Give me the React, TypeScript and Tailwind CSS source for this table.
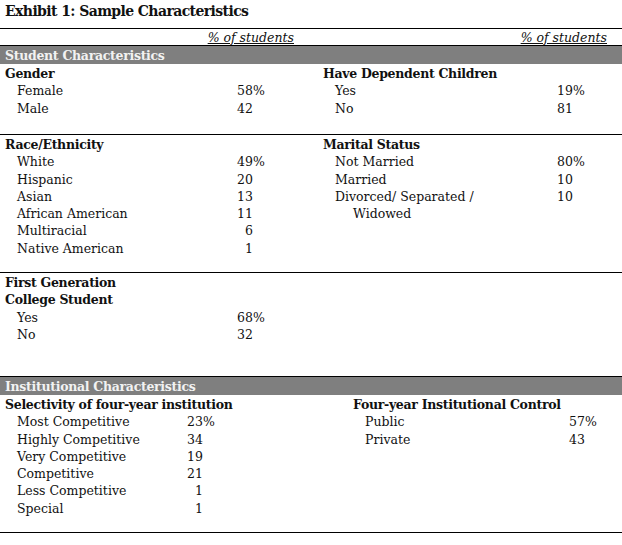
import React from "react";

type Row = { label: string; value?: string; pct?: boolean; cont?: boolean };
type Group = { title: string[]; rows: Row[] };

const serif = "font-['DejaVu_Serif',serif]";

function Value({ value, pct }: { value?: string; pct?: boolean }) {
  if (!value) return null;
  return (
    <span className="inline-flex">
      <span className="inline-block w-[2ch] text-right">{value}</span>
      {pct ? <span>%</span> : null}
    </span>
  );
}

function Side({
  group,
  labelW,
  valueW,
}: {
  group?: Group;
  labelW: string;
  valueW: string;
}) {
  if (!group) return <div />;
  return (
    <div className="flex flex-col pt-[1px]">
      {group.title.map((t) => (
        <div key={t} className="h-[17.3px] pl-[5px] font-bold tracking-[-0.3px] whitespace-nowrap">
          {t}
        </div>
      ))}
      {group.rows.map((r, i) => (
        <div key={i} className="flex h-[17.3px]">
          <div className={`${labelW} whitespace-nowrap ${r.cont ? "pl-[35px]" : "pl-[17px]"}`}>
            {r.label}
          </div>
          <div className={`${valueW} pl-[5px]`}>
            <Value value={r.value} pct={r.pct} />
          </div>
        </div>
      ))}
    </div>
  );
}

function Block({
  left,
  right,
  height,
  cols,
}: {
  left?: Group;
  right?: Group;
  height: string;
  cols: "top" | "bottom";
}) {
  const top = cols === "top";
  return (
    <div className={`flex border-b border-black ${height}`}>
      <div className={top ? "w-[318px]" : "w-[348px]"}>
        <Side
          group={left}
          labelW={top ? "w-[232px]" : "w-[182px]"}
          valueW={top ? "w-[86px]" : "w-[166px]"}
        />
      </div>
      <div className="flex-1">
        <Side
          group={right}
          labelW={top ? "w-[234px]" : "w-[216px]"}
          valueW={top ? "w-[70px]" : "w-[58px]"}
        />
      </div>
    </div>
  );
}

export default function App() {
  return (
    <div className={`w-[622px] h-[545px] bg-white text-[#111] text-[12.5px] leading-[17.3px] ${serif}`}>
      <div className="h-[29px] pl-[5px] pt-[3px] text-[14px] font-bold tracking-[-0.6px] border-b border-black">
        Exhibit 1: Sample Characteristics
      </div>
      <div className="flex h-[17px] border-b border-black italic">
        <div className="w-[294px] text-right">
          <span className="underline">% of students</span>
        </div>
        <div className="w-[313px] text-right">
          <span className="underline">% of students</span>
        </div>
      </div>
      <div className="h-[18px] pt-[1px] bg-[#7f7f7f] text-[#f2f2f2] font-bold tracking-[-0.3px] pl-[5px]">
        Student Characteristics
      </div>
      <Block
        cols="top"
        height="h-[71px]"
        left={{
          title: ["Gender"],
          rows: [
            { label: "Female", value: "58", pct: true },
            { label: "Male", value: "42" },
          ],
        }}
        right={{
          title: ["Have Dependent Children"],
          rows: [
            { label: "Yes", value: "19", pct: true },
            { label: "No", value: "81" },
          ],
        }}
      />
      <Block
        cols="top"
        height="h-[138px]"
        left={{
          title: ["Race/Ethnicity"],
          rows: [
            { label: "White", value: "49", pct: true },
            { label: "Hispanic", value: "20" },
            { label: "Asian", value: "13" },
            { label: "African American", value: "11" },
            { label: "Multiracial", value: "6" },
            { label: "Native American", value: "1" },
          ],
        }}
        right={{
          title: ["Marital Status"],
          rows: [
            { label: "Not Married", value: "80", pct: true },
            { label: "Married", value: "10" },
            { label: "Divorced/ Separated /", value: "10" },
            { label: "Widowed", cont: true },
          ],
        }}
      />
      <Block
        cols="top"
        height="h-[104px]"
        left={{
          title: ["First Generation", "College Student"],
          rows: [
            { label: "Yes", value: "68", pct: true },
            { label: "No", value: "32" },
          ],
        }}
      />
      <div className="h-[18px] pt-[1px] bg-[#7f7f7f] text-[#f2f2f2] font-bold tracking-[-0.3px] pl-[5px]">
        Institutional Characteristics
      </div>
      <Block
        cols="bottom"
        height="h-[138px]"
        left={{
          title: ["Selectivity of four-year institution"],
          rows: [
            { label: "Most Competitive", value: "23", pct: true },
            { label: "Highly Competitive", value: "34" },
            { label: "Very Competitive", value: "19" },
            { label: "Competitive", value: "21" },
            { label: "Less Competitive", value: "1" },
            { label: "Special", value: "1" },
          ],
        }}
        right={{
          title: ["Four-year Institutional Control"],
          rows: [
            { label: "Public", value: "57", pct: true },
            { label: "Private", value: "43" },
          ],
        }}
      />
    </div>
  );
}
